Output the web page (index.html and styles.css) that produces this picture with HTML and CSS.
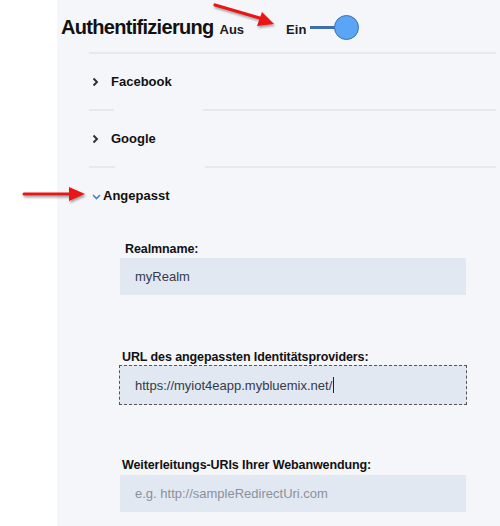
FILE: index.html
```
<!DOCTYPE html>
<html lang="de">
<head>
<meta charset="utf-8">
<link rel="stylesheet" href="styles.css">
</head>
<body>
<div class="page">
  <div class="gutter"></div>
  <main class="panel">
    <header class="head">
      <h1 class="title">Authentifizierung</h1>
      <span class="opt off">Aus</span>
      <span class="opt on">Ein</span>
      <span class="toggle"><span class="track"></span><span class="knob"></span></span>
    </header>
    <section class="list">
      <div class="divider full"></div>
      <div class="row"><svg class="chev" width="7" height="10" viewBox="0 0 7 10"><path d="M1.5 1.5 L5 5 L1.5 8.5" fill="none" stroke="#2c2f36" stroke-width="1.9"/></svg><span class="name">Facebook</span></div>
      <div class="divider gap1"></div>
      <div class="row"><svg class="chev" width="7" height="10" viewBox="0 0 7 10"><path d="M1.5 1.5 L5 5 L1.5 8.5" fill="none" stroke="#2c2f36" stroke-width="1.9"/></svg><span class="name">Google</span></div>
      <div class="divider gap2"></div>
      <div class="row open">
        <svg class="chev-down" width="9" height="6" viewBox="0 0 9 6"><path d="M1 1 L4.5 4.5 L8 1" fill="none" stroke="#4a7fc0" stroke-width="1.6"/></svg>
        <span class="name">Angepasst</span>
      </div>
    </section>
    <form class="form">
      <div class="field f1">
        <label class="label">Realmname:</label>
        <div class="input">myRealm</div>
      </div>
      <div class="field f2">
        <label class="label">URL des angepassten Identitätsproviders:</label>
        <div class="input focus">https://myiot4eapp.mybluemix.net/<span class="caret"></span></div>
      </div>
      <div class="field f3">
        <label class="label">Weiterleitungs-URIs Ihrer Webanwendung:</label>
        <div class="input placeholder">e.g. http://sampleRedirectUri.com</div>
      </div>
    </form>
  </main>
  <svg class="arrow a1" width="70" height="30" viewBox="0 0 70 30">
    <defs><filter id="sh" x="-20%" y="-50%" width="140%" height="200%"><feDropShadow dx="1" dy="2" stdDeviation="1.2" flood-color="#000" flood-opacity="0.35"/></filter></defs>
    <g filter="url(#sh)">
      <line x1="2" y1="3" x2="50" y2="17" stroke="#e81414" stroke-width="3.2" stroke-linecap="round"/>
      <polygon points="61,22 44,24 49,10" fill="#e81414"/>
    </g>
  </svg>
  <svg class="arrow a2" width="70" height="20" viewBox="0 0 70 20">
    <g filter="url(#sh)">
      <line x1="2" y1="8" x2="50" y2="8" stroke="#e81414" stroke-width="3" stroke-linecap="round"/>
      <polygon points="63,8 47,1 47,15" fill="#e81414"/>
    </g>
  </svg>
</div>
</body>
</html>
```
FILE: styles.css
```
* { box-sizing: border-box; }
html, body { margin: 0; padding: 0; background: #fff; }
body { font-family: "Liberation Sans", Arial, sans-serif; color: #1a1a1a; }
.page { position: relative; display: flex; width: 500px; height: 526px; overflow: hidden; }
.gutter { width: 57px; flex: none; background: #fff; }
.panel { flex: 1; background: #f5f6fa; padding-left: 4px; }
.head { display: flex; align-items: center; height: 52px; padding-top: 3px; }
.title { margin: 0; font-size: 20px; font-weight: bold; letter-spacing: -0.7px; color: #111; }
.opt { font-size: 13px; font-weight: bold; color: #1a1a1a; position: relative; top: 2px; }
.off { margin-left: 6px; }
.on { margin-left: 42px; }
.toggle { display: flex; align-items: center; margin-left: 4px; position: relative; top: 0px; }
.track { width: 26px; height: 3px; background: #3f6eae; }
.knob { width: 25px; height: 25px; border-radius: 50%; background: #5aa5f5; border: 1.5px solid #3f6fae; margin-left: -2px; }
.list { padding-left: 28px; padding-right: 4px; }
.divider { height: 2px; background: #e6e8ee; }
.divider.gap1 { background: linear-gradient(to right, #e6e8ee 0 25px, transparent 25px 114px, #e6e8ee 114px); }
.divider.gap2 { background: linear-gradient(to right, #e6e8ee 0 26px, transparent 26px 116px, #e6e8ee 116px); }
.row { display: flex; align-items: center; height: 55px; font-size: 13px; font-weight: bold; }
.chev { margin-left: 3px; margin-right: 12px; flex: none; }
.chev-down { margin-left: 3px; margin-right: 2px; position: relative; top: 1px; }
.name { color: #111; }
.form { padding-left: 59px; padding-right: 34px; }
.field { display: flex; flex-direction: column; }
.f1 { margin-top: 17px; }
.f2 { margin-top: 53px; }
.f3 { margin-top: 51px; }
.label { font-size: 12.5px; font-weight: bold; color: #111; padding-left: 5px; height: 18px; line-height: 18px; letter-spacing: -0.1px; }
.f2 .label, .f3 .label { padding-left: 2px; }
.input { height: 37px; background: #e1e8f2; font-size: 13px; color: #353a48; padding-left: 15px; display: flex; align-items: center; }
.f2 .input { height: 40px; border: 1px dashed #555; margin: -1px -1px 0 -1px; padding-left: 15px; }
.f3 .input { margin-top: 1px; }
.placeholder { color: #8b909a; }
.caret { display: inline-block; width: 1px; height: 16px; background: #222; margin-left: 1px; }
.arrow { position: absolute; overflow: visible; }
.a1 { left: 213px; top: 2px; }
.a2 { left: 22px; top: 186px; }
```
